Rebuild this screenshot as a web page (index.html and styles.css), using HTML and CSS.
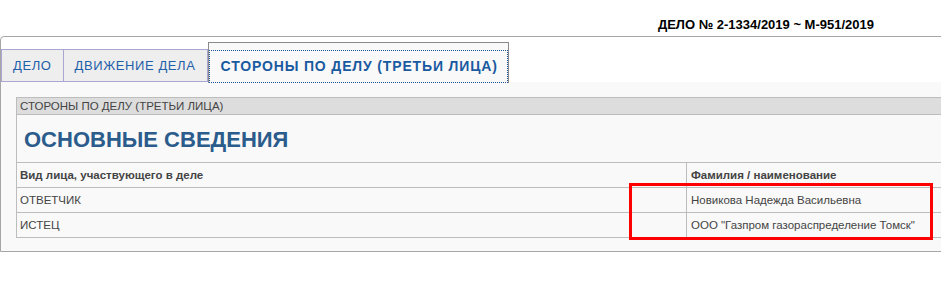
FILE: index.html
```html
<!DOCTYPE html>
<html lang="ru">
<head>
<meta charset="utf-8">
<title>Дело</title>
<link rel="stylesheet" href="styles.css">
</head>
<body>
<div class="page">
  <div class="case-title">ДЕЛО № 2-1334/2019 ~ М-951/2019</div>
  <div class="tabs-wrap">
    <ul class="tabs">
      <li class="tab">ДЕЛО</li>
      <li class="tab">ДВИЖЕНИЕ ДЕЛА</li>
      <li class="tab active"><span class="focus">СТОРОНЫ ПО ДЕЛУ (ТРЕТЬИ ЛИЦА)</span></li>
    </ul>
    <div class="panel">
      <table class="info">
        <tr><td class="caption" colspan="2">СТОРОНЫ ПО ДЕЛУ (ТРЕТЬИ ЛИЦА)</td></tr>
        <tr><td class="heading" colspan="2">ОСНОВНЫЕ СВЕДЕНИЯ</td></tr>
        <tr class="head"><td class="c1">Вид лица, участвующего в деле</td><td>Фамилия / наименование</td></tr>
        <tr><td class="c1">ОТВЕТЧИК</td><td>Новикова Надежда Васильевна</td></tr>
        <tr><td class="c1">ИСТЕЦ</td><td>ООО "Газпром газораспределение Томск"</td></tr>
      </table>
    </div>
  </div>
  <div class="highlight"></div>
</div>
</body>
</html>
```
FILE: styles.css
```css
html, body {
  margin: 0;
  padding: 0;
  background: #fff;
  overflow: hidden;
}
body {
  font-family: "Liberation Sans", Arial, sans-serif;
  width: 941px;
  height: 301px;
}
.page {
  position: relative;
  width: 941px;
  height: 301px;
  overflow: hidden;
}
.case-title {
  height: 36px;
  box-sizing: border-box;
  padding: 17px 67px 0 0;
  text-align: right;
  font-size: 13px;
  font-weight: bold;
  color: #000;
  line-height: 15px;
}
.tabs-wrap {
  width: 1100px;
  border: 1px solid #a6a6a6;
  border-top-left-radius: 4px;
  background: #fff;
}
.tabs {
  list-style: none;
  margin: 0;
  padding: 5px 0 0 0;
  display: flex;
  align-items: flex-end;
  height: 45px;
  box-sizing: border-box;
}
.tab {
  height: 33px;
  box-sizing: border-box;
  border: 1px solid #a9a6d2;
  border-right: none;
  background: #eeeeee;
  color: #1f5ea8;
  font-size: 13px;
  letter-spacing: 0.6px;
  line-height: 31px;
  padding: 0 11px;
}
.tab:nth-child(2) {
  border-right: 1px solid #a9a6d2;
}
.tab.active {
  height: 41px;
  border: 1px solid #8a8a8a;
  border-bottom: none;
  background: #f9f9f9;
  padding: 7px 0 0 0;
  margin-bottom: -1px;
  position: relative;
}
.focus {
  display: block;
  height: 33px;
  box-sizing: border-box;
  border: 1px dotted #1a4f9a;
  font-weight: bold;
  font-size: 14px;
  letter-spacing: 0.85px;
  color: #1a5aa0;
  line-height: 30px;
  padding: 0 9px 0 11px;
}
.panel {
  background: #f9f9f9;
  padding: 15px 0 13px 15px;
}
.info {
  border-collapse: collapse;
  width: 1050px;
  font-size: 11.5px;
  color: #444;
}
.info td {
  border: 1px solid #bdbdbd;
  padding: 0 4px;
  height: 24px;
  vertical-align: middle;
  text-align: left;
}
.info .c1 {
  width: 662px;
  padding-left: 3px;
}
.info .caption {
  background: #dddddd;
  height: 16px;
  color: #444;
  padding-left: 3px;
}
.info .heading {
  height: 45px;
  font-size: 22px;
  font-weight: bold;
  color: #2b5c8c;
  padding-left: 7px;
  padding-top: 2px;
}
.info .head td {
  font-weight: bold;
}
.highlight {
  position: absolute;
  left: 629px;
  top: 183px;
  width: 304px;
  height: 57px;
  box-sizing: border-box;
  border: 3px solid #ff0000;
}
```
